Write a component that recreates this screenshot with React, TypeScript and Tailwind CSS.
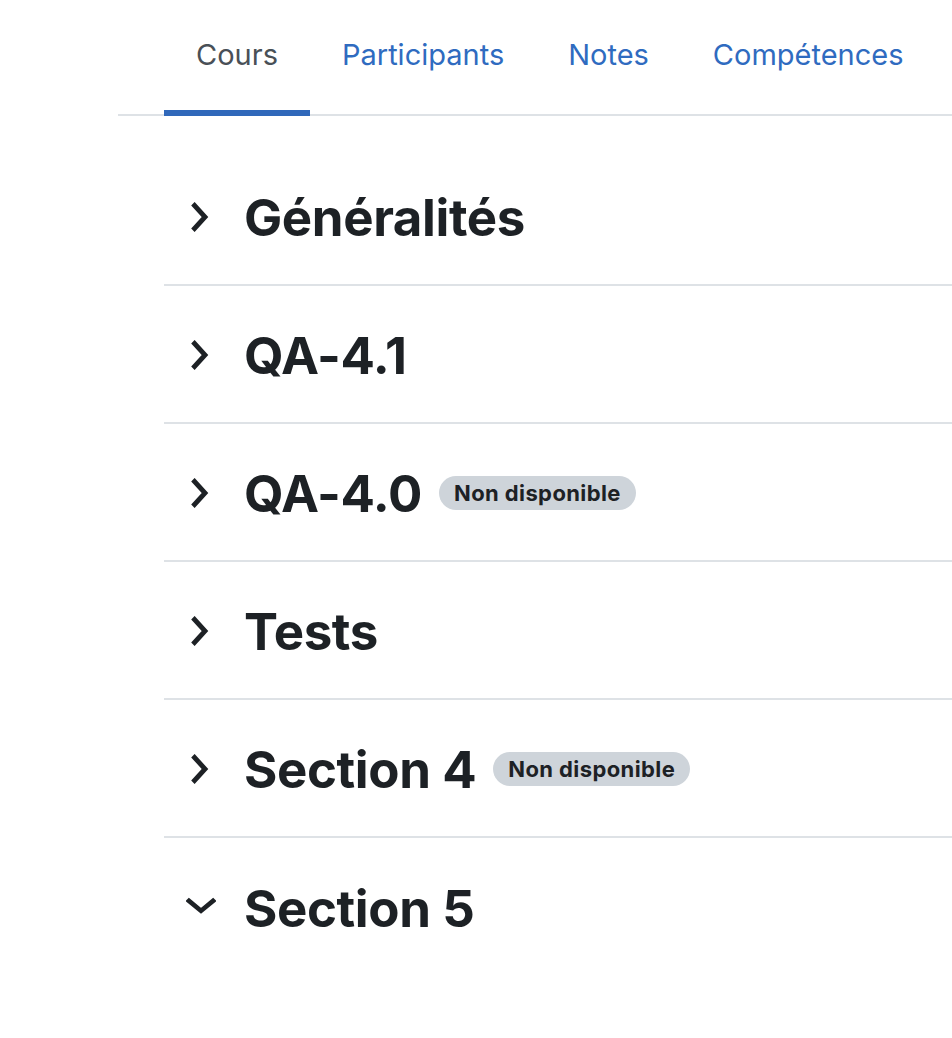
import React from 'react';

type Section = { title: string; hidden?: boolean; open?: boolean };

const sections: Section[] = [
  { title: 'Généralités' },
  { title: 'QA-4.1' },
  { title: 'QA-4.0', hidden: true },
  { title: 'Tests' },
  { title: 'Section 4', hidden: true },
  { title: 'Section 5', open: true },
];

const tabs = ['Cours', 'Participants', 'Notes', 'Compétences'];

const Chevron: React.FC<{ open?: boolean }> = ({ open }) => (
  <svg width="30" height="30" viewBox="0 0 30 30" className="text-[#1d2125]">
    {open ? (
      <path d="M3 11l12 11 12-11" fill="none" stroke="currentColor" strokeWidth="5" strokeLinecap="square" strokeLinejoin="miter" transform="translate(0 -2) scale(1 0.9)" />
    ) : (
      <path d="M9 3.5l11 11.5-11 11.5" fill="none" stroke="currentColor" strokeWidth="5" strokeLinecap="square" strokeLinejoin="miter" transform="scale(0.95 1)" />
    )}
  </svg>
);

export default function App() {
  return (
    <div className="min-h-screen bg-white font-['Inter','Noto_Sans',sans-serif] text-[#1d2125] pl-[118px] overflow-hidden">
      <nav className="border-b-2 border-[#dee2e6]">
        <ul className="flex pl-[46px]">
          {tabs.map((t, i) => (
            <li
              key={t}
              className={
                'h-[116px] -mb-[2px] px-[32px] pt-[32px] text-[29px] leading-[45px] whitespace-nowrap ' +
                (i === 0 ? 'border-b-[6px] border-[#3068ba] text-[#495057]' : 'text-[#2f6bc0]')
              }
            >
              {t}
            </li>
          ))}
        </ul>
      </nav>

      <div className="ml-[46px] pt-[32px]">
        {sections.map((s, i) => (
          <div
            key={s.title}
            className={'flex items-center h-[138px] pt-[2px] ' + (i < sections.length - 1 ? 'border-b-2 border-[#dee2e6]' : '')}
          >
            <div className="w-[80px] pl-[22px] flex items-center">
              <Chevron open={s.open} />
            </div>
            <h3 className="text-[51px] font-bold leading-none tracking-[-0.4px]">{s.title}</h3>
            {s.hidden && (
              <span className="ml-[17px] inline-flex items-center h-[34px] px-[15px] rounded-full bg-[#ced4da] text-[22px] font-bold tracking-[0.4px] text-[#1d2125]">
                Non disponible
              </span>
            )}
          </div>
        ))}
      </div>
    </div>
  );
}
